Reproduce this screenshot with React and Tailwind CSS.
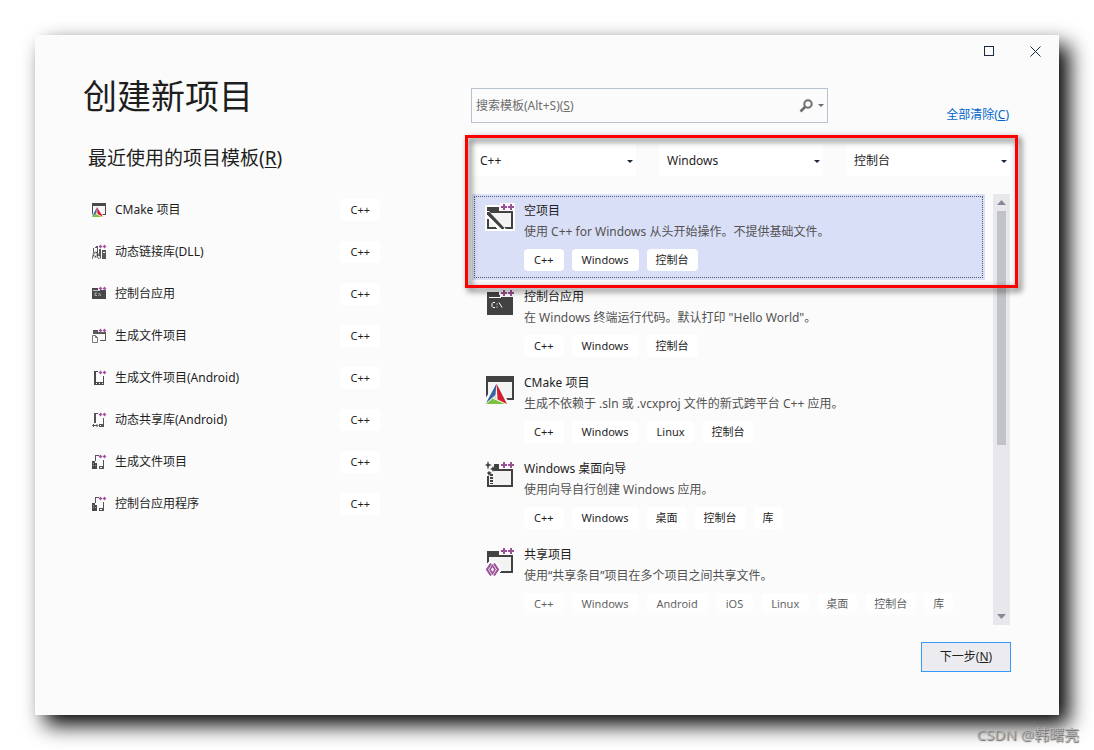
import { useState } from 'react'
import clsx from 'clsx'

const recent = [
  { name: 'CMake 项目', icon: SmallCMake },
  { name: '动态链接库(DLL)', icon: SmallDll },
  { name: '控制台应用', icon: SmallConsole },
  { name: '生成文件项目', icon: SmallMakefile },
  { name: '生成文件项目(Android)', icon: SmallPhone },
  { name: '动态共享库(Android)', icon: SmallPhoneLib },
  { name: '生成文件项目', icon: SmallBuild },
  { name: '控制台应用程序', icon: SmallBuild },
]

const filters = [
  { label: '语言', value: 'C++' },
  { label: '平台', value: 'Windows' },
  { label: '项目类型', value: '控制台' },
]

const templates = [
  {
    name: '空项目',
    desc: '使用 C++ for Windows 从头开始操作。不提供基础文件。',
    tags: ['C++', 'Windows', '控制台'],
    icon: EmptyIcon,
  },
  {
    name: '控制台应用',
    desc: '在 Windows 终端运行代码。默认打印 "Hello World"。',
    tags: ['C++', 'Windows', '控制台'],
    icon: ConsoleIcon,
  },
  {
    name: 'CMake 项目',
    desc: '生成不依赖于 .sln 或 .vcxproj 文件的新式跨平台 C++ 应用。',
    tags: ['C++', 'Windows', 'Linux', '控制台'],
    icon: CMakeIcon,
  },
  {
    name: 'Windows 桌面向导',
    desc: '使用向导自行创建 Windows 应用。',
    tags: ['C++', 'Windows', '桌面', '控制台', '库'],
    icon: WizardIcon,
  },
  {
    name: '共享项目',
    desc: '使用“共享条目”项目在多个项目之间共享文件。',
    tags: ['C++', 'Windows', 'Android', 'iOS', 'Linux', '桌面', '控制台', '库'],
    icon: SharedIcon,
  },
]

/* ---------- icons, 30px ---------- */

function BigSvg({ children }) {
  return (
    <svg width="30" height="30" viewBox="0 0 30 30" className="shrink-0" shapeRendering="crispEdges" aria-hidden="true">
      {children}
    </svg>
  )
}

function PlusPlus() {
  return (
    <>
      <path d="M15 1h15v8H15z" fill="#fbfbfb" />
      <path d="M18 2h2v2h2v2h-2v2h-2V6h-2V4h2zM25 2h2v2h2v2h-2v2h-2V6h-2V4h2z" fill="#9b4f96" />
    </>
  )
}

function EmptyIcon() {
  return (
    <BigSvg>
      <path d="M0 3h30v26H0z" fill="#fff" />
      <path d="M2 5h12v4h14v18H2z" fill="#424242" />
      <path d="M4 11h22v14H4z" fill="#f3f3f3" />
      <path d="M0 9h4l17 18v1H0v-2h2v1h7v-2H4v-8H0z" fill="#fff" shapeRendering="auto" />
      <path d="M2 18h2v7h6l2 2H2z" fill="#424242" />
      <path d="M4 18v7h7z" fill="#f3f3f3" shapeRendering="auto" />
      <path d="M2 10h2.500L19 25.500V27h-2.500L2 12.500z" fill="#424242" shapeRendering="auto" />
      <PlusPlus />
    </BigSvg>
  )
}

function ConsoleIcon() {
  return (
    <BigSvg>
      <path d="M2 4h12v3h14v20H2z" fill="#424242" />
      <path d="M4 9h12v1H4z" fill="#fff" />
      <path
        d="M10 14H8l-1 1v3l1 1h2M12 15v1M12 18v1M14 14l3 5"
        transform="translate(0 .5)"
        stroke="#fff"
        fill="none"
        shapeRendering="auto"
      />
      <PlusPlus />
    </BigSvg>
  )
}

function CMakeIcon() {
  return (
    <BigSvg>
      <path d="M1 2h28v24H1z" fill="#424242" />
      <path d="M3 8h24v16H3z" fill="#f3f3f3" />
      <path d="M11 8L0 25v5h25z" fill="#fbfbfb" shapeRendering="auto" />
      <g shapeRendering="auto">
        <path d="M11.500 9.500L1 29l9.500-8z" fill="#3465a4" />
        <path d="M11.500 9.500L22 30l-9.500-4.500z" fill="#d0202e" />
        <path d="M1 30l6.500-5.500L20 30z" fill="#7fc241" />
        <path d="M10.500 20.500l1.500 5-4-1.500z" fill="#d8dce0" />
      </g>
    </BigSvg>
  )
}

function WizardIcon() {
  return (
    <BigSvg>
      <path d="M9 4h5v5h14v18H2V16h2v9h22V11H9z" fill="#424242" />
      <path d="M9 11h17v14H4v-9h5z" fill="#f3f3f3" />
      <path d="M5 14h3v2H5zM5 17h3v2H5zM5 20h3v2H5zM5 23h3v1H5z" fill="#424242" />
      <g fill="#424242" shapeRendering="auto">
        <path d="M3 1l1 3 3 1-3 1-1 4-1-4-2-1 2-1z" />
        <path d="M8 6l1 2 2 1-2 1-1 2-1-2-2-1 2-1z" />
        <path d="M4 11l1 1 2 1-2 1-1 2-1-2-1-1 1-1z" />
      </g>
      <PlusPlus />
    </BigSvg>
  )
}

function SharedIcon() {
  return (
    <BigSvg>
      <path d="M2 5h12v4h14v18H2z" fill="#424242" />
      <path d="M4 11h22v14H4z" fill="#f3f3f3" />
      <path d="M5 15h5l6 6v4l-3 5H0v-11z" fill="#fbfbfb" />
      <g fill="none" stroke="#9b4f96" strokeWidth="2" shapeRendering="auto">
        <path d="M6 17.500L2 23.500l4 6M9 17.500l4 6-4 6" />
        <path d="M7.500 19.500l-2.500 4 2.500 4 2.500-4z" strokeWidth="1.600" />
      </g>
      <PlusPlus />
    </BigSvg>
  )
}

/* ---------- icons, 16px ---------- */

function SmallSvg({ children }) {
  return (
    <svg width="16" height="16" viewBox="0 0 16 16" className="shrink-0" aria-hidden="true">
      {children}
    </svg>
  )
}

function SmallPlus() {
  return <path d="M9 1h1v1h1v1h-1v1H9V3H8V2h1zM13 1h1v1h1v1h-1v1h-1V3h-1V2h1z" fill="#a553a0" stroke="#a553a0" strokeWidth=".4" />
}

function SmallCMake() {
  return (
    <SmallSvg>
      <path d="M1 1h14v12H1z" fill="#4a4a4a" />
      <path d="M2 4h12v8H2z" fill="#f6f6f6" />
      <path d="M6 4L0 15h13z" fill="#fbfbfb" />
      <path d="M6 5L1 15l4.500-4z" fill="#3465a4" />
      <path d="M6 5l6 10-5.500-3z" fill="#e01b2b" />
      <path d="M1 15l3.500-3L11 15z" fill="#7fc241" />
    </SmallSvg>
  )
}

function SmallDll() {
  return (
    <SmallSvg>
      <path d="M4 3h1V2h2v9H6V4H4zM8 5h2v7H8zM11 6h4v9h-4zM2 4h1v4H2z" fill="#5a5a5a" />
      <path d="M12 8h2v1h-2z" fill="#fff" />
      <circle cx="4.500" cy="10.500" r="2.200" fill="none" stroke="#4a4a4a" strokeWidth="1.800" strokeDasharray="1.600 .7" />
      <circle cx="8" cy="13" r="1.500" fill="none" stroke="#5a5a5a" strokeWidth="1.200" strokeDasharray="1.200 .6" />
      <path d="M1 12h1v3H1z" fill="#777" />
      <SmallPlus />
    </SmallSvg>
  )
}

function SmallConsole() {
  return (
    <SmallSvg>
      <path d="M1 2h6v2h8v9H1z" fill="#484848" />
      <path d="M2 4h7v1H2z" fill="#c4c4c4" />
      <path d="M6 7H4v2.500h2M7.500 7.500v.7M7.500 9v.7M8.500 7l1 3" stroke="#ddd" strokeWidth=".7" fill="none" />
      <SmallPlus />
    </SmallSvg>
  )
}

function SmallMakefile() {
  return (
    <SmallSvg>
      <path d="M2 2h5v2h8v9H9v-1h5V6H2z" fill="#5a5a5a" />
      <path d="M1.500 7.500h3l2 2v5h-5z" fill="#fbfbfb" stroke="#777" />
      <path d="M4.500 7.500v2h2" fill="none" stroke="#777" />
      <SmallPlus />
    </SmallSvg>
  )
}

function SmallPhone() {
  return (
    <SmallSvg>
      <path d="M3 1h4v1H5v10h7V6h1v9H3z" fill="#4a4a4a" />
      <path d="M5 13h1v1H5zM8 13h1v1H8zM11 13h1v1h-1z" fill="#fff" />
      <SmallPlus />
    </SmallSvg>
  )
}

function SmallPhoneLib() {
  return (
    <SmallSvg>
      <path d="M3 1h4v1H5v9H3zM12 6h1v9H8v-3h4z" fill="#555" />
      <path d="M9 13h1v1H9z" fill="#fff" />
      <path d="M1.500 13.500h5M3 12l-1.500 1.500L3 15M5.500 12L7 13.500 5.500 15" fill="none" stroke="#555" />
      <SmallPlus />
    </SmallSvg>
  )
}

function SmallBuild() {
  return (
    <SmallSvg>
      <path d="M4 1h4v1H5v5H4zM12 6h1v9H8v-3h4z" fill="#555" />
      <path d="M9 13h2v1H9z" fill="#fff" />
      <path d="M1 7h3v2h2v6H1z" fill="#4a4a4a" />
      <path d="M2 9h1v1H2zM2 11h1v1H2zM4 11h1v1H4z" fill="#999" />
      <SmallPlus />
    </SmallSvg>
  )
}

/* ---------- pieces ---------- */

function Caret({ className }) {
  return (
    <svg width="6" height="3" viewBox="0 0 6 3" className={className} fill="currentColor" aria-hidden="true">
      <path d="M0 0h6L3 3z" />
    </svg>
  )
}

// latin words get a little more room than the square CJK glyphs
function Tag({ children }) {
  const latin = /^[\x20-\x7e]+$/.test(children)
  return (
    <span
      className={clsx(
        'h-[22px] rounded bg-white text-[11px] leading-[22px] whitespace-nowrap text-[#1e1e1e]',
        latin ? 'px-[10px]' : 'px-[9px]',
      )}
    >
      {children}
    </span>
  )
}

function Recent() {
  return (
    <section className="w-[297px] shrink-0 pt-[9px]">
      <h1 className="text-[34px] leading-10 whitespace-nowrap">创建新项目</h1>
      <h2 className="mt-[30px] pl-[5px] text-[19px] leading-6 whitespace-nowrap">
        最近使用的项目模板(<u className="underline-offset-2">R</u>)
      </h2>
      <ul className="mt-[19px] pl-2">
        {recent.map(({ name, icon: Icon }, i) => (
          <li key={i}>
            <button className="flex h-[42px] w-full items-center gap-2 text-left">
              <Icon />
              <span className="flex-1">{name}</span>
              <Tag>C++</Tag>
            </button>
          </li>
        ))}
      </ul>
    </section>
  )
}

function Search() {
  return (
    <div className="flex items-end justify-between">
      <div className="relative flex h-[35px] w-[357px] items-center border border-[#b9c2d0] pr-[3px]">
        <input id="search" type="text" className="peer h-full min-w-0 flex-1 bg-transparent px-1 outline-none" placeholder=" " />
        <label
          htmlFor="search"
          className="pointer-events-none absolute left-1 hidden text-[#6d6d6d] peer-placeholder-shown:block"
        >
          搜索模板(Alt+S)(<u>S</u>)
        </label>
        <button aria-label="搜索" className="flex items-center gap-[5px] text-[#6d6d6d]">
          <svg width="14" height="14" viewBox="0 0 14 14" fill="none" stroke="currentColor" aria-hidden="true">
            <circle cx="9" cy="5" r="3.700" strokeWidth="2" />
            <path d="M6.500 7.500l-5 5" strokeWidth="2.600" />
          </svg>
          <Caret />
        </button>
      </div>
      <a href="#" className="mr-[2px] leading-4 text-[#0066cc]">
        全部清除(<u>C</u>)
      </a>
    </div>
  )
}

function Filters() {
  return (
    <div className="grid grid-cols-3 gap-[23px] px-px">
      {filters.map((f) => (
        <div key={f.label} className="relative">
          <select aria-label={f.label} className="h-8 w-full appearance-none bg-white px-2 pt-0.5 text-[#1e1e1e] outline-none">
            <option>{f.value}</option>
          </select>
          <Caret className="pointer-events-none absolute top-4 right-[3px] text-[#1b293e]" />
        </div>
      ))}
    </div>
  )
}

function Scrollbar() {
  return (
    <div className="flex w-[17px] flex-col items-center bg-[#e8e8ec] py-[6px] text-[#868999]">
      <svg width="9" height="5" viewBox="0 0 9 5" fill="currentColor" aria-hidden="true">
        <path d="M0 5h9L4.500 0z" />
      </svg>
      <div className="mt-[6px] flex-1">
        <div className="h-[58%] w-[9px] bg-[#c2c3c9]" />
      </div>
      <svg width="9" height="5" viewBox="0 0 9 5" fill="currentColor" aria-hidden="true">
        <path d="M0 0h9L4.500 5z" />
      </svg>
    </div>
  )
}

function TemplateList() {
  const [selected, setSelected] = useState(0)

  return (
    <div className="mt-[18px] flex gap-2 px-px">
      <ul className="relative min-w-0 flex-1 pb-px">
        {templates.map(({ name, desc, tags, icon: Icon }, i) => (
          <li key={name}>
            <button
              onClick={() => setSelected(i)}
              className={clsx(
                'flex w-full gap-[9px] pt-[6px] pb-[9px] pl-[13px] text-left',
                i === selected && 'bg-[#dadff8] outline-1 outline-offset-[-3px] outline-[#555a6b] outline-dotted',
              )}
            >
              <span className="pt-[2px]">
                <Icon />
              </span>
              <span className="flex min-w-0 flex-col leading-[21px]">
                <span className="whitespace-nowrap">{name}</span>
                <span className="whitespace-nowrap text-[#525252]">{desc}</span>
                <span className="mt-[7px] flex gap-2">
                  {tags.map((t) => (
                    <Tag key={t}>{t}</Tag>
                  ))}
                </span>
              </span>
            </button>
          </li>
        ))}
        <li
          aria-hidden="true"
          className="pointer-events-none absolute inset-x-0 bottom-0 h-10 bg-linear-to-t from-[#fbfbfb]/60 to-[#fbfbfb]/0"
        />
      </ul>
      <Scrollbar />
    </div>
  )
}

export default function App() {
  return (
    <div className="relative flex min-h-screen bg-white p-[35px] font-['Noto_Sans','Noto_Sans_CJK_SC',sans-serif] text-xs text-[#1e1e1e]">
      <main className="flex flex-1 flex-col bg-[#fbfbfb] shadow-[10px_10px_20px_#000]">
        <header className="flex h-8 justify-end text-[#1b293e]">
          <button aria-label="最大化" className="flex w-[47px] items-center justify-center">
            <span className="size-[10px] border border-current" />
          </button>
          <button aria-label="关闭" className="flex w-[47px] items-center justify-center">
            <svg width="11" height="11" viewBox="0 0 11 11" stroke="currentColor" aria-hidden="true">
              <path d="M.5 .5l10 10M10.500 .5l-10 10" />
            </svg>
          </button>
        </header>

        <div className="flex flex-1 gap-[91px] px-12">
          <Recent />
          <section className="min-w-0 flex-1 pt-[21px]">
            <Search />
            <div className="relative mt-[21px]">
              <Filters />
              <TemplateList />
              <div className="pointer-events-none absolute -top-[9px] -right-[7px] -left-[6px] h-[153px] border-3 border-[#fe0000] drop-shadow-[3px_3px_3px_rgba(0,0,0,0.7)]" />
            </div>
            <div className="mt-[17px] flex justify-end">
              <button className="h-[30px] w-[90px] border border-[#3399ff] bg-[#ececf0]">
                下一步(<u>N</u>)
              </button>
            </div>
          </section>
        </div>
      </main>
      <p className="absolute right-[15px] bottom-[6px] text-[15px] leading-5 text-[#b4b4b4] [text-shadow:1px_1px_1px_#666]">CSDN @韩曙亮</p>
    </div>
  )
}
